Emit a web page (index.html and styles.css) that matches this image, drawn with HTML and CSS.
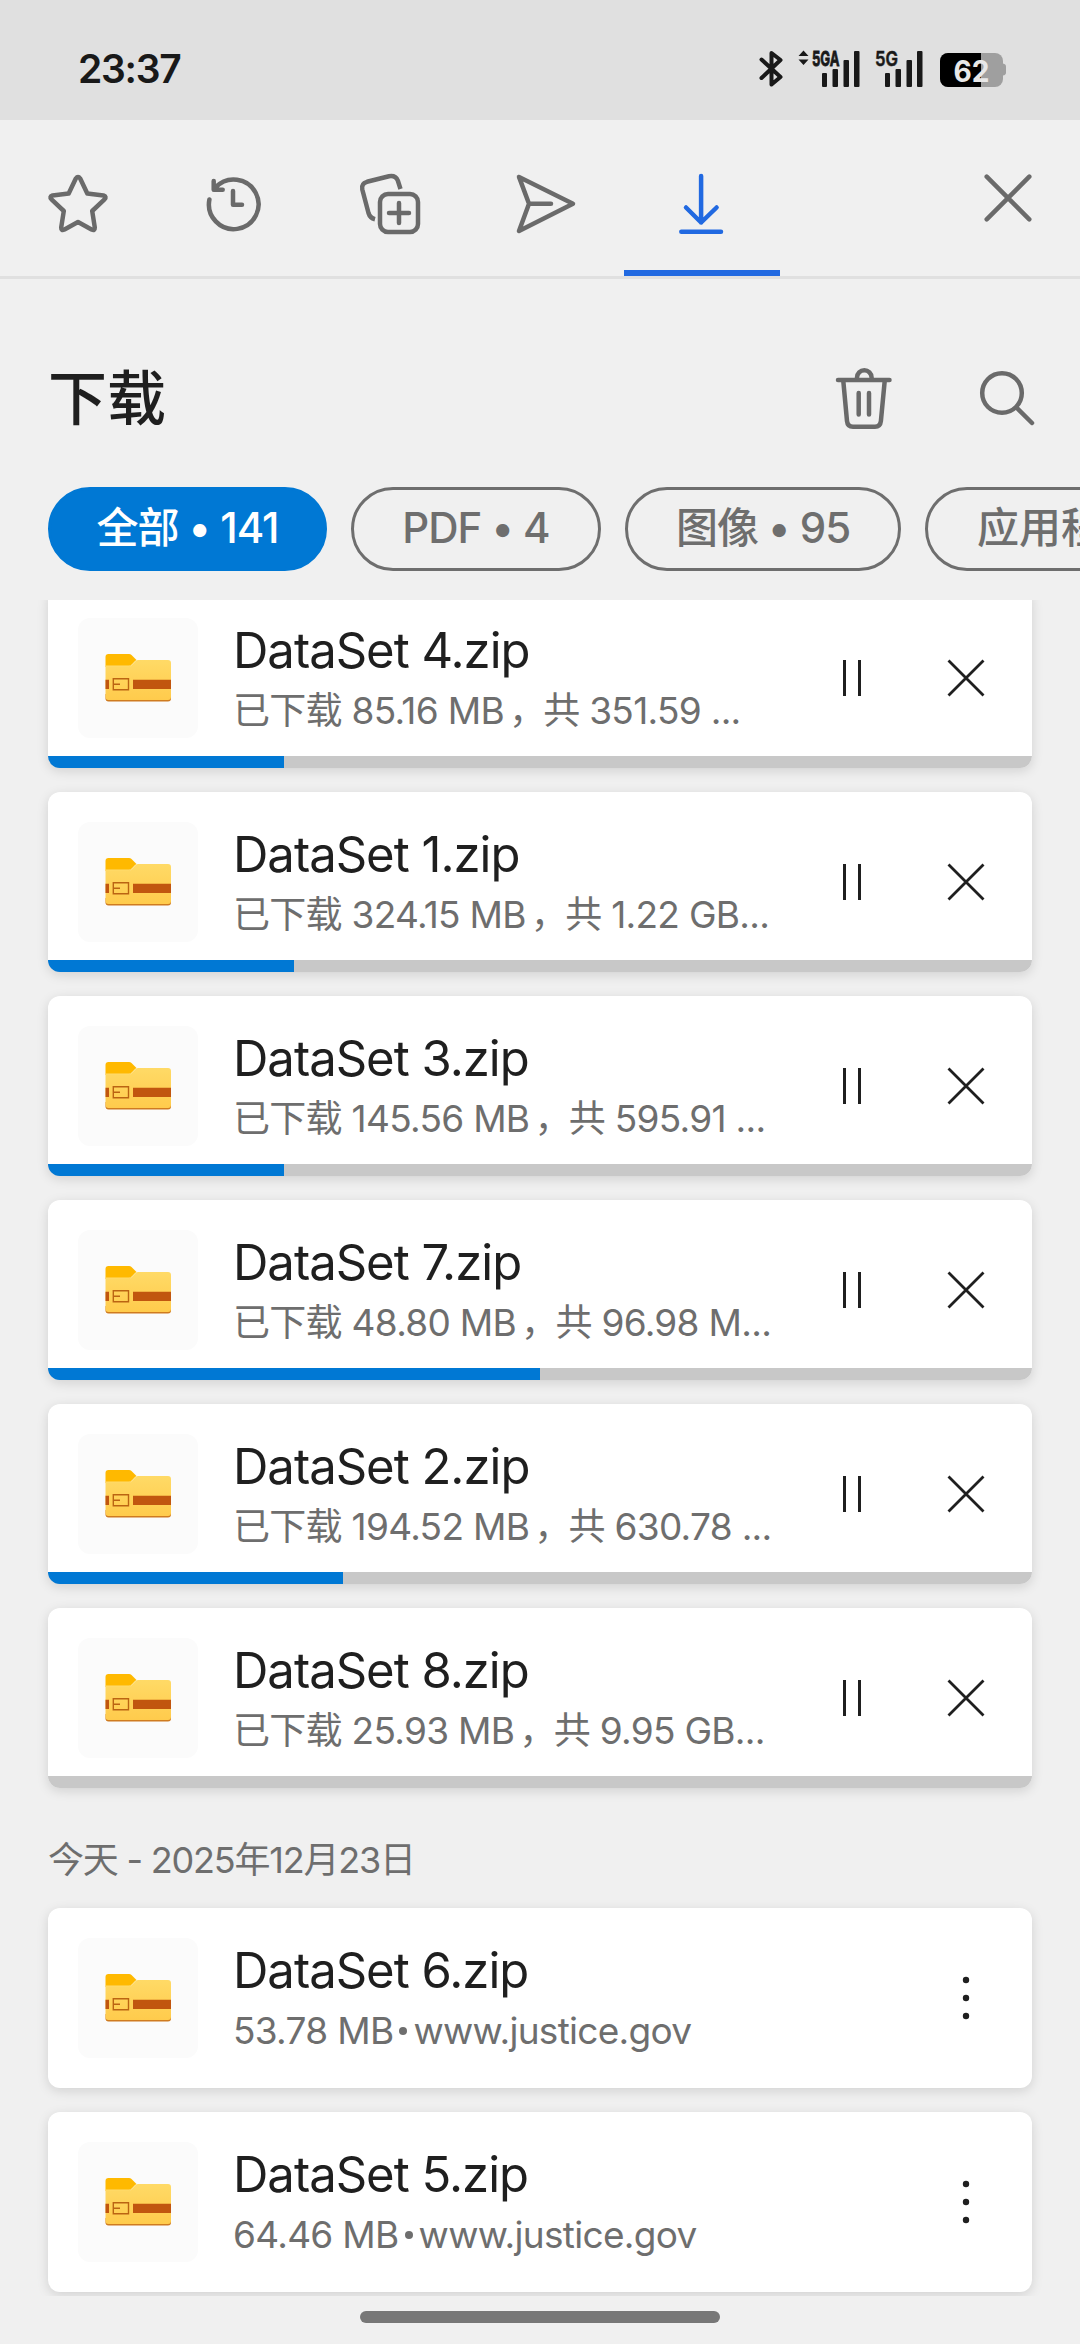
FILE: index.html
```html
<!DOCTYPE html>
<html lang="zh-CN">
<head>
<meta charset="utf-8">
<title>下载</title>
<link rel="stylesheet" href="styles.css">
</head>
<body>
<svg class="sprite" width="0" height="0" aria-hidden="true">
  <defs>
    <linearGradient id="folder-fill" x1="0" y1="0" x2="0" y2="1">
      <stop offset="0" stop-color="#ffda66"/><stop offset="1" stop-color="#ffcb4c"/>
    </linearGradient>
  </defs>
  <symbol id="zip" viewBox="0 0 120 120">
    <path d="M27.5 46V39a3 3 0 0 1 3-3H51q1.500 0 2.500 1L58.500 42 52 49H27.500z" fill="#ffb900"/>
    <path d="M27.500 80.500a3 3 0 0 0 3 3H90a3 3 0 0 0 3-3V76H27.500z" fill="#cf7b20"/>
    <path d="M27.500 48.500H51q1.500 0 2.500-1L58 42.800q.8-.8 2-.8H90a3 3 0 0 1 3 3V79a3 3 0 0 1-3 3H30.500a3 3 0 0 1-3-3z" fill="url(#folder-fill)"/>
    <path d="M28 48.100H51q1.500 0 2.500-1L58 42.400" fill="none" stroke="#ffe48c" stroke-width="1"/>
    <path d="M27.500 61.700H31v9.400h-3.500zM55 61.700h38v9.400H55z" fill="#c1560f"/>
    <path d="M35.300 60.700h15.200v11H35.300zM35.300 66.200H42" fill="none" stroke="#bb6412" stroke-width="1.400"/>
  </symbol>
  <symbol id="pause" viewBox="0 0 72 72"><path d="M28.500 18v36M43.500 18v36" stroke="#1f1f1f" stroke-width="3"/></symbol>
  <symbol id="cancel" viewBox="0 0 72 72"><path d="M18.500 18.500l35 35M53.500 18.500l-35 35" stroke="#1f1f1f" stroke-width="2.800"/></symbol>
  <symbol id="more" viewBox="0 0 72 72"><g fill="#1f1f1f"><circle cx="36" cy="18" r="3.200"/><circle cx="36" cy="36" r="3.200"/><circle cx="36" cy="54" r="3.200"/></g></symbol>
</svg>

<header class="status">
  <span class="clock">23:37</span>
  <svg class="signals" viewBox="756 44 256 48" width="256" height="48">
    <path d="M761.500 59.500L780.500 77 771.500 84.500V53L780.500 60 761.500 78" fill="none" stroke="#191919" stroke-width="4" stroke-linecap="round" stroke-linejoin="round"/>
    <path d="M798.500 56L803.500 50.500 808.500 56zM798.500 59.500H808.500L803.500 65z" fill="#191919"/>
    <text class="net net-bold" x="812" y="66" textLength="27.500" lengthAdjust="spacingAndGlyphs">5GA</text>
    <g fill="#191919">
      <rect x="822" y="73" width="5" height="14" rx="1"/><rect x="832.500" y="69" width="5.500" height="18" rx="1"/>
      <rect x="843.500" y="60" width="5.500" height="27" rx="1"/><rect x="854" y="51" width="5.500" height="36" rx="1"/>
      <rect x="885" y="73" width="5" height="14" rx="1"/><rect x="895.500" y="69" width="5.500" height="18" rx="1"/>
      <rect x="906.500" y="60" width="5.500" height="27" rx="1"/><rect x="917" y="51" width="5.500" height="36" rx="1"/>
    </g>
    <text class="net" x="875" y="66" textLength="23" lengthAdjust="spacingAndGlyphs">5G</text>
    <rect x="940" y="53" width="63" height="34" rx="8" fill="#9f9f9f"/>
    <path d="M1003 63.500q3 .5 3 3v6q0 2.500-3 3z" fill="#9f9f9f"/>
    <path d="M981 53H948a8 8 0 0 0-8 8V79a8 8 0 0 0 8 8H981z" fill="#000"/>
    <text class="level" x="953.500" y="81.500" textLength="36" lengthAdjust="spacingAndGlyphs">62</text>
  </svg>
</header>

<nav class="tabs">
  <a class="tab"><svg viewBox="0 0 156 156"><path d="M75.800 58.500Q78 55.500 80.200 58.500L87.300 73.500 103.500 75.500Q107 76.500 104.500 79.300L92.200 91 94.800 107.500Q95 111 91.500 109.500L78 102 64.500 109.500Q61 111 61.200 107.500L63.800 91 51.500 79.300Q49 76.500 52.500 75.500L68.700 73.500z"/></svg></a>
  <a class="tab"><svg viewBox="0 0 156 156"><path d="M53.400 79.500A24.800 24.800 0 1 0 59.500 67.500M57.700 61V69.700H66.700M58.500 68.500L62 65M77 71V84.700H86"/></svg></a>
  <a class="tab"><svg viewBox="0 0 156 156"><rect x="68" y="74" width="38" height="38" rx="8"/><path d="M87 83V103M77 92.900H97"/><path class="butt" d="M63 99.300Q58 98 56.500 93L50.300 69.500Q49 63.500 55 61.800L77 56.200Q83.500 55 85.800 60.500L88.500 69"/></svg></a>
  <a class="tab"><svg viewBox="0 0 156 156"><path d="M51 56.900L105 83.700 51 111 61 83.700zM61 83.700H83"/></svg></a>
  <a class="tab active"><svg viewBox="0 0 156 156"><path d="M77.100 56V102.500M62 87.500L77.100 102.500 92.600 87.500M57.300 111.700H97"/></svg></a>
  <a class="close"><svg viewBox="0 0 72 72"><path d="M14.700 14.700L57.300 57.300M57.300 14.700L14.700 57.300"/></svg></a>
</nav>

<section class="heading">
  <h1>下载</h1>
  <svg class="tool" viewBox="828 363 72 72"><path d="M838 380H889.500M857 379V377.500a7.300 7.300 0 0 1 14.600 0V379M843.300 381L847 421Q847.500 426.700 853 426.700H875Q880.300 426.700 880.900 421L884.700 381M858.700 393V414.500M869 393V414.500"/></svg>
  <svg class="tool" viewBox="972 363 72 72"><circle cx="1002" cy="393" r="19.800"/><path d="M1016.500 407.500L1032 423"/></svg>
</section>

<div class="chips">
  <span class="chip chip-all selected">全部 • 141</span>
  <span class="chip chip-pdf">PDF • 4</span>
  <span class="chip chip-image">图像 • 95</span>
  <span class="chip chip-app">应用程</span>
</div>

<main class="list">
  <article class="card">
    <div class="row"><svg class="thumb"><use href="#zip"/></svg>
      <div class="info"><h2>DataSet 4.zip</h2><p>已下载 85.16 MB<span class="comma">，</span>共 351.59 ...</p></div>
      <svg class="action"><use href="#pause"/></svg><svg class="action"><use href="#cancel"/></svg></div>
    <div class="progress"><div class="bar" style="width:23.98%"></div></div>
  </article>
  <article class="card">
    <div class="row"><svg class="thumb"><use href="#zip"/></svg>
      <div class="info"><h2>DataSet 1.zip</h2><p>已下载 324.15 MB<span class="comma">，</span>共 1.22 GB...</p></div>
      <svg class="action"><use href="#pause"/></svg><svg class="action"><use href="#cancel"/></svg></div>
    <div class="progress"><div class="bar" style="width:25%"></div></div>
  </article>
  <article class="card">
    <div class="row"><svg class="thumb"><use href="#zip"/></svg>
      <div class="info"><h2>DataSet 3.zip</h2><p>已下载 145.56 MB<span class="comma">，</span>共 595.91 ...</p></div>
      <svg class="action"><use href="#pause"/></svg><svg class="action"><use href="#cancel"/></svg></div>
    <div class="progress"><div class="bar" style="width:24%"></div></div>
  </article>
  <article class="card">
    <div class="row"><svg class="thumb"><use href="#zip"/></svg>
      <div class="info"><h2>DataSet 7.zip</h2><p>已下载 48.80 MB<span class="comma">，</span>共 96.98 M...</p></div>
      <svg class="action"><use href="#pause"/></svg><svg class="action"><use href="#cancel"/></svg></div>
    <div class="progress"><div class="bar" style="width:50%"></div></div>
  </article>
  <article class="card">
    <div class="row"><svg class="thumb"><use href="#zip"/></svg>
      <div class="info"><h2>DataSet 2.zip</h2><p>已下载 194.52 MB<span class="comma">，</span>共 630.78 ...</p></div>
      <svg class="action"><use href="#pause"/></svg><svg class="action"><use href="#cancel"/></svg></div>
    <div class="progress"><div class="bar" style="width:30%"></div></div>
  </article>
  <article class="card">
    <div class="row"><svg class="thumb"><use href="#zip"/></svg>
      <div class="info"><h2>DataSet 8.zip</h2><p>已下载 25.93 MB<span class="comma">，</span>共 9.95 GB...</p></div>
      <svg class="action"><use href="#pause"/></svg><svg class="action"><use href="#cancel"/></svg></div>
    <div class="progress"><div class="bar" style="width:0%"></div></div>
  </article>
  <h3 class="date">今天 - 2025年12月23日</h3>
  <article class="card">
    <div class="row"><svg class="thumb"><use href="#zip"/></svg>
      <div class="info"><h2>DataSet 6.zip</h2><p>53.78 MB<b class="dot"></b>www.justice.gov</p></div>
      <svg class="action"><use href="#more"/></svg></div>
  </article>
  <article class="card">
    <div class="row"><svg class="thumb"><use href="#zip"/></svg>
      <div class="info"><h2>DataSet 5.zip</h2><p>64.46 MB<b class="dot"></b>www.justice.gov</p></div>
      <svg class="action"><use href="#more"/></svg></div>
  </article>
</main>
<footer class="navbar"><div class="handle"></div></footer>
</body>
</html>
```
FILE: styles.css
```css
* { box-sizing: border-box; margin: 0; padding: 0; }
body {
  width: 1080px;
  height: 2344px;
  overflow: hidden;
  display: flex;
  flex-direction: column;
  background: #f0f0f0;
  color: #1f1f1f;
  font-family: Inter, "Noto Sans CJK SC", sans-serif;
  white-space: nowrap;
}
svg { display: block; flex: none; }
.sprite { height: 0; }

.status {
  height: 120px;
  flex: none;
  display: flex;
  justify-content: space-between;
  align-items: center;
  padding: 16px 68px 0 78px;
  background: #e0e0e0;
}
.clock { font-size: 39px; font-weight: 600; letter-spacing: -1.300px; color: #191919; }
.net { font: 600 20.500px Inter, sans-serif; fill: #191919; stroke: #191919; stroke-width: .5; }
.net-bold { font-weight: 700; stroke-width: .8; }
.level { font: 700 30px Inter, sans-serif; fill: #e8e8e8; }

.tabs {
  height: 159px;
  flex: none;
  display: flex;
  border-bottom: 3px solid #e0e0e0;
}
.tabs svg, .tool {
  fill: none;
  stroke: #6a6a6a;
  stroke-width: 4.500;
  stroke-linecap: round;
  stroke-linejoin: round;
}
.tab { width: 156px; height: 156px; }
.tab svg { width: 156px; height: 156px; }
.tab .butt { stroke-linecap: butt; }
.active { box-shadow: inset 0 -6px #2169e1; }
.tabs .active svg { stroke: #2169e1; }
.close { margin: 42px 36px 0 auto; }
.close svg { width: 72px; height: 72px; }

.heading {
  height: 156px;
  flex: none;
  margin-top: 42px;
  padding: 0 36px 0 48px;
  display: flex;
  align-items: center;
  gap: 72px;
}
.heading h1 { flex: 1; font-size: 59px; font-weight: 500; line-height: 84px; }
.tool { width: 72px; height: 72px; }

.chips {
  height: 84px;
  flex: none;
  margin-top: 10px;
  padding-left: 48px;
  display: flex;
  gap: 24px;
  overflow: hidden;
}
.chip {
  flex: none;
  height: 84px;
  border: 3px solid #6e6e6e;
  border-radius: 42px;
  text-align: center;
  font-size: 42px;
  font-weight: 500;
  letter-spacing: -1px;
  line-height: 76px;
  color: #6e6e6e;
}
.selected { background: #0078d4; border-color: #0078d4; color: #fff; }
.chip-all { width: 279px; }
.chip-pdf { width: 250px; }
.chip-image { width: 276px; }
.chip-app { width: 320px; padding-left: 49px; text-align: left; letter-spacing: 0; }

.list {
  height: 1696px;
  flex: none;
  margin-top: 29px;
  padding: 0 48px;
  overflow: hidden;
}
.card {
  height: 180px;
  margin-bottom: 24px;
  border-radius: 12px;
  overflow: hidden;
  background: #fff;
  box-shadow: 0 3px 12px rgba(0, 0, 0, .13);
  display: flex;
  flex-direction: column;
}
.card:first-child { margin-top: -12px; }
.row {
  height: 180px;
  flex: none;
  display: flex;
  align-items: center;
  padding: 0 30px;
}
.thumb { width: 120px; height: 120px; border-radius: 12px; background: #fbfbfb; }
.info { flex: 1; width: 0; margin-left: 35px; }
.info h2 { font-size: 49px; font-weight: 400; line-height: 60px; letter-spacing: -1px; }
.info p { font-size: 37px; line-height: 54px; padding-top: 3px; margin-bottom: -3px; letter-spacing: -.7px; color: #6e6e6e; }
.comma { padding-left: 5px; margin-right: -2px; }
.dot {
  display: inline-block;
  width: 8px;
  height: 8px;
  margin: 0 6px;
  border-radius: 50%;
  background: #6e6e6e;
  vertical-align: 9px;
}
.action { width: 72px; height: 72px; margin-left: 42px; }
.progress { height: 12px; margin-top: -12px; flex: none; background: #c8c8c8; }
.bar { height: 12px; background: #0078d4; }
.date {
  height: 96px;
  padding-top: 21px;
  font-size: 36px;
  font-weight: 400;
  line-height: 54px;
  letter-spacing: -1.200px;
  color: #6e6e6e;
}
.navbar { flex: 1; display: flex; justify-content: center; padding-top: 15px; }
.handle { width: 360px; height: 12px; border-radius: 6px; background: #777; }
```
